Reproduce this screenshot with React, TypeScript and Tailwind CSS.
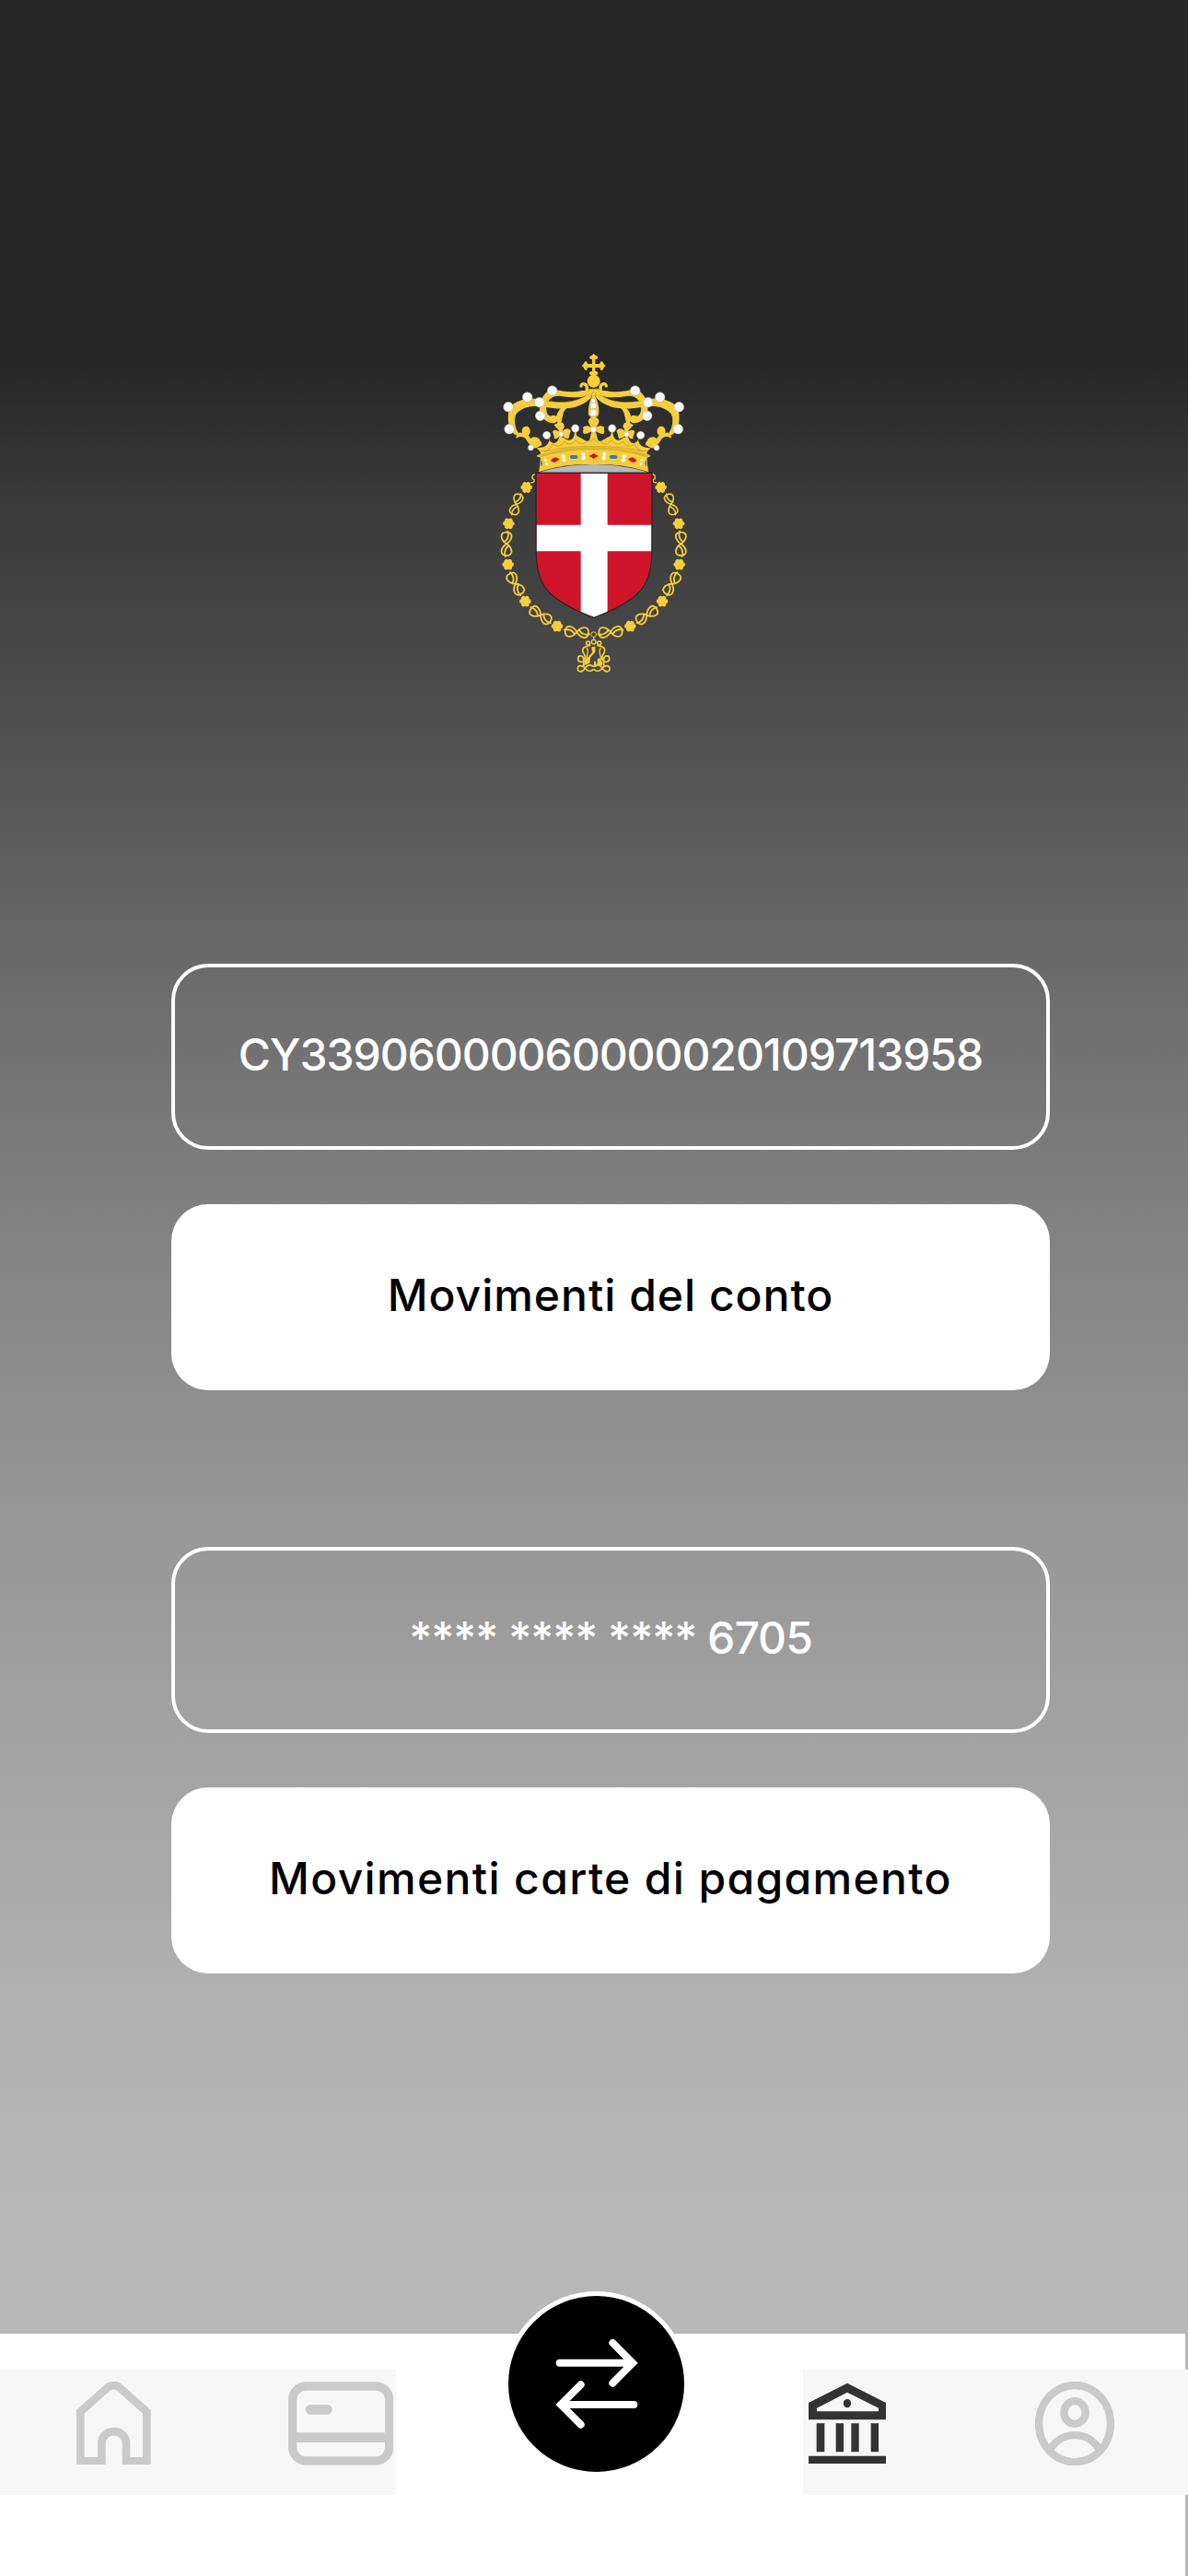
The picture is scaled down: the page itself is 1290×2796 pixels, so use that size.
const GOLD = '#f6ce3c'
const GOLD_SHADE = '#9c7d22'

const KNOTS = [
  { x: 123, y: 533, angle: -72, scale: 0.9 },
  { x: 91, y: 662, angle: 90, scale: 1 },
  { x: 120, y: 792, angle: 60, scale: 1 },
  { x: 202, y: 894, angle: 33, scale: 1 },
  { x: 320, y: 949, angle: 4, scale: 1 },
]

const ROSETTES = [
  { x: 156, y: 478 },
  { x: 98, y: 596 },
  { x: 96, y: 729 },
  { x: 152, y: 849 },
  { x: 256, y: 930 },
]

const PEARLS = [
  { x: 97, y: 216, r: 16 },
  { x: 100, y: 288, r: 16 },
  { x: 159, y: 184, r: 16 },
  { x: 240, y: 163, r: 16 },
  { x: 198, y: 201, r: 16 },
  { x: 201, y: 245, r: 16 },
  { x: 222, y: 308, r: 12.5 },
  { x: 315, y: 286, r: 12.5 },
  { x: 268, y: 305, r: 8 },
  { x: 170, y: 349, r: 9 },
]

interface PointProps {
  x: number
  y: number
}

interface KnotProps extends PointProps {
  angle: number
  scale: number
}

interface PearlProps extends PointProps {
  r: number
}

const Pearl = ({ x, y, r }: PearlProps) => (
  <circle cx={x} cy={y} r={r} fill="#fafafa" stroke="#a9a9a9" strokeWidth="1.5" />
)

const Knot = ({ x, y, angle, scale }: KnotProps) => (
  <g
    transform={`translate(${x} ${y}) rotate(${angle}) scale(${scale})`}
    fill="none"
    stroke={GOLD}
    strokeWidth="5.5"
    strokeLinecap="round"
  >
    <path d="M-38 0 C-38 -24 -14 -20 0 0 C14 20 38 24 38 0 C38 -24 14 -20 0 0 C-14 20 -38 24 -38 0Z" />
    <path d="M-41 -4 C-26 -10 -12 -2 -6 8 M41 4 C26 10 12 2 6 -8" />
  </g>
)

const Rosette = ({ x, y }: PointProps) => (
  <g transform={`translate(${x} ${y})`} fill={GOLD}>
    <circle r="15" />
    {[0, 60, 120, 180, 240, 300].map((angle) => (
      <circle key={angle} r="7" cy="-12" transform={`rotate(${angle + 30})`} />
    ))}
  </g>
)

const CrownHalf = () => (
  <g>
    {/* back and front arches */}
    <path
      d="M238 156 C262 164 296 169 318 166 C338 163 350 160 358 168 L362 178 C335 186 300 187 268 181 C242 178 226 190 221 214 C218 236 228 248 240 247 C252 240 258 252 254 262 C246 274 222 268 206 250 C192 222 196 180 238 156Z"
      fill={GOLD}
    />
    <path
      d="M364 172 C338 188 312 198 286 200 C256 202 222 198 196 190 C162 184 122 194 102 216 C94 238 94 268 104 292 C110 302 120 308 130 310 L132 304 C118 284 114 258 122 240 C134 222 162 212 198 213 C240 222 282 224 310 218 C338 210 356 198 368 184Z"
      fill={GOLD}
    />
    <path
      d="M364 172 C338 188 312 198 286 200 C262 201 240 200 222 196"
      fill="none"
      stroke={GOLD_SHADE}
      strokeWidth="1.5"
    />
    <path d="M292 216 C272 230 276 244 268 270 L258 268 C246 256 256 226 276 214Z" fill={GOLD} />
    <circle cx="244" cy="256" r="13" fill={GOLD} />
    {/* curl under the orb */}
    <path
      d="M372 170 C358 176 350 168 353 154 C353 138 334 138 334 148"
      fill="none"
      stroke={GOLD}
      strokeWidth="10"
      strokeLinecap="round"
    />
    {/* side leaf and scroll */}
    <path
      d="M122 318 C122 302 136 296 142 302 C138 284 150 276 160 280 C172 288 170 304 162 308 L170 320 C178 310 188 314 198 320 C200 330 208 330 206 340 C196 346 186 352 174 350 L152 318 C140 310 132 312 122 318Z"
      fill={GOLD}
    />
    {/* trefoil */}
    <path
      d="M258 268 C270 262 278 268 280 280 C276 286 274 290 274 295 C282 284 296 284 301 296 C294 304 298 312 292 320 C282 318 276 312 272 310 L276 334 L260 334 L264 310 C258 320 250 322 246 318 C248 308 240 304 242 294 C250 288 256 292 262 296 C262 288 250 284 246 274Z"
      fill={GOLD}
    />
    {/* coronet */}
    <path
      d="M375.500 312 L368 312 C364 326 352 332 342 322 L320 310 L315 288 L311 310 C304 328 290 328 278 316 L262 316 C258 334 244 340 232 326 L223 304 L230 326 C226 342 214 350 189 350 C196 358 204 362 202 368 L188 376 L202 382 C200 394 200 410 196 428 Q286 398 375.500 404Z"
      fill={GOLD}
    />
    <path
      d="M202 358 C226 366 238 346 242 336 C252 350 272 344 280 328 C290 342 308 338 316 324 C326 338 346 340 354 326"
      fill="none"
      stroke={GOLD_SHADE}
      strokeWidth="1.5"
    />
    <path
      d="M196 374 Q286 347 375 349 M200 378 Q286 352 375 354 M214 361 Q286 343 375 345"
      fill="none"
      stroke={GOLD_SHADE}
      strokeWidth="1.5"
    />
    {/* jewels */}
    <path d="M202 390 C210 394 210 404 203 411Z" fill="#3c7abf" />
    <path d="M234 390 Q244 382 248 380 Q256 382 264 386 Q256 394 248 397 Q240 396 234 390Z" fill="#ce142b" />
    <rect x="298" y="373" width="25" height="12" rx="5" fill="#3c7abf" />
    <g fill="#fff">
      <circle cx="218" cy="389" r="4" />
      <circle cx="222" cy="402" r="4" />
      <circle cx="276" cy="377" r="6.5" />
      <circle cx="278" cy="389" r="6.5" />
      <circle cx="341" cy="370" r="6" />
      <circle cx="342" cy="382" r="6.5" />
    </g>
    {PEARLS.map((pearl) => (
      <Pearl key={`${pearl.x}-${pearl.y}`} {...pearl} />
    ))}
  </g>
)

const CollarHalf = () => (
  <g>
    <path
      d="M183 434 C172 440 172 450 181 453 C184 460 176 464 170 462"
      fill="none"
      stroke={GOLD}
      strokeWidth="4"
    />
    {KNOTS.map((knot) => (
      <Knot key={knot.y} {...knot} />
    ))}
    {ROSETTES.map((rosette) => (
      <Rosette key={rosette.y} {...rosette} />
    ))}
    {/* pendant frame */}
    <g fill="none" stroke={GOLD} strokeWidth="5">
      <circle cx="357" cy="985" r="6" />
      <path d="M364 992 C344 996 336 1002 340 1014 C344 1024 352 1028 346 1040 C340 1050 324 1048 324 1036 C324 1024 338 1024 342 1034 L342 1060" />
      <path d="M352 1000 C362 1014 350 1024 352 1040" strokeWidth="4" />
      <path d="M375 1062 C362 1052 352 1058 346 1068 C338 1082 322 1080 323 1068 C324 1056 340 1056 348 1068 C356 1080 366 1078 375 1070" />
    </g>
  </g>
)

const Crest = () => (
  <svg viewBox="70 40 610 1045" className="h-[348.33px] w-[203.33px]">
    {[false, true].map((mirrored) => (
      <g key={String(mirrored)} transform={mirrored ? 'translate(750 0) scale(-1 1)' : undefined}>
        <CollarHalf />
        <CrownHalf />
      </g>
    ))}
    {/* cross and orb */}
    <g fill={GOLD}>
      <path d="M370 50 H380 V76 H404 V88 H380 V108 H370 V88 H346 V76 H370Z" />
      <path d="M375 42 L382 49 Q390 50 388 58 Q382 62 375 60 Q368 62 362 58 Q360 50 368 49Z" />
      <path d="M336 82 L343 75 Q344 67 352 68 Q357 75 355 82 Q357 89 352 97 Q344 97 343 89Z" />
      <path d="M414 82 L407 75 Q406 67 398 68 Q393 75 395 82 Q393 89 398 97 Q406 97 407 89Z" />
      <path d="M362 102 Q368 98 375 102 Q382 98 388 102 Q392 110 382 113 H368 Q358 110 362 102Z" />
      <circle cx="375" cy="132" r="21" />
      <path d="M357 158 H393 L385 180 H365Z" />
      <path d="M375 176 C360 190 356 228 358 240 Q362 250 375 250 Q388 250 391 240 C394 228 390 190 375 176Z" />
    </g>
    <path
      d="M360 156 Q367 150 375 158 Q383 150 390 156 M366 180 L372 168 L378 168 L384 180"
      fill="none"
      stroke={GOLD_SHADE}
      strokeWidth="1.5"
    />
    <Pearl x={374} y={196} r={7.5} />
    <Pearl x={374} y={212} r={10.5} />
    <Pearl x={374} y={235} r={11.5} />
    <path
      d="M375 244 C384 250 398 258 390 270 L384 282 C392 276 402 276 410 282 C406 290 414 298 406 304 C396 304 390 300 382 296 L388 322 L375 330 L362 322 L368 296 C360 300 354 304 344 304 C336 298 344 290 340 282 C348 276 358 276 366 282 L360 270 C352 258 366 250 375 244Z"
      fill={GOLD}
    />
    <path
      d="M354 326 Q366 334 375 318 Q384 334 396 326"
      fill="none"
      stroke={GOLD_SHADE}
      strokeWidth="1.5"
    />
    <Pearl x={374} y={290} r={9} />
    <path d="M359 376 Q370 371 375 367 Q381 371 391 376 Q381 381 375 385 Q370 381 359 376Z" fill="#ce142b" />
    <path d="M197 429 Q280 403 375 403 Q470 403 553 429Z" fill="#bab9b9" />
    {/* shield */}
    <clipPath id="shield">
      <path d="M188 432 H564 V676 C564 752 550 794 516 826 C480 858 430 882 376 902 C322 882 270 856 236 826 C202 794 188 752 188 676Z" />
    </clipPath>
    <g clipPath="url(#shield)">
      <rect x="180" y="430" width="390" height="480" fill="#ce142b" />
      <path d="M333 430 H420 V600 H570 V686 H420 V910 H333 V686 H180 V600 H333Z" fill="#fff" />
    </g>
    <path
      d="M187 431 H565 V676 C565 752 550 794 516 826 C480 858 430 882 376 902 C322 882 270 856 236 826 C202 794 187 752 187 676Z"
      fill="none"
      stroke="#272525"
      strokeWidth="3.5"
    />
    {/* pendant */}
    <g fill="none" stroke={GOLD} strokeWidth="4">
      <circle cx="375" cy="957" r="8.5" strokeWidth="3" />
      <path d="M375 966 V974" />
      <circle cx="375" cy="981" r="7" />
    </g>
    <path
      d="M368 998 L380 996 L380 1014 L364 1032 L362 1050 L344 1058 L344 1044 L354 1034 L370 1016Z M388 1036 L394 1034 L404 1048 L402 1058 L386 1056Z M377 1044 L382 1044 L384 1062 L374 1062Z"
      fill={GOLD}
    />
  </svg>
)

const HomeIcon = () => (
  <svg viewBox="248 373 243 272" className="h-[90.67px] w-[81px]" fill="none" stroke="#cacaca" strokeWidth="26">
    <path d="M261 632 V471 L350 392 Q369 378 388 392 L477 471 V632 H410 V575 C410 522 330 522 330 575 V632Z" />
  </svg>
)

const CardIcon = () => (
  <svg viewBox="938 373 343 273" className="h-[91px] w-[114.33px]" fill="none" stroke="#cacaca" strokeWidth="28">
    <rect x="952" y="388" width="315" height="243" rx="44" />
    <path d="M952 555 H1267" strokeWidth="32" />
    <path d="M1010 464 H1065" strokeWidth="32" strokeLinecap="round" />
  </svg>
)

const BankIcon = () => (
  <svg viewBox="114 373 252 268" className="h-[89.33px] w-[84px]" fill="#333">
    <path
      fillRule="evenodd"
      d="M240 378 L366 442 V497 H114 V442Z M240 408 L141 459 V470 H342 V459Z"
    />
    <ellipse cx="240" cy="444" rx="12.5" ry="14" />
    <path d="M140 509 H166 V602 H140Z M203 509 H228 V602 H203Z M253 509 H278 V602 H253Z M317 509 H342 V602 H317Z M114 615 H366 V641 H114Z" />
  </svg>
)

const ProfileIcon = () => (
  <svg viewBox="851 372 258 274" className="h-[91.33px] w-[86px]" fill="none" stroke="#cacaca" strokeWidth="25">
    <ellipse cx="980" cy="509" rx="117" ry="125" />
    <ellipse cx="980" cy="472.500" rx="35" ry="37" />
    <path d="M902 590 C938 532 1022 532 1058 590" />
  </svg>
)

const SwapIcon = () => (
  <svg viewBox="518 235 270 296" className="h-[98.67px] w-[90px]" fill="none" stroke="#fff" strokeWidth="24" strokeLinecap="round">
    <path d="M532 315.500 H762 M705 250 L770 315.500 L705 381 M774 451 H545 M601 386 L536 451 L601 516" />
    <path d="M762 299 L786 315.500 L762 332Z M544 434 L521 451 L544 468Z" fill="#fff" stroke="none" />
  </svg>
)

interface AccountGroupProps {
  number: string
  action: string
  numberClass: string
  actionClass: string
}

const AccountGroup = ({ number, action, numberClass, actionClass }: AccountGroupProps) => (
  <section className="flex flex-col gap-[59px]">
    <div className="flex h-[202px] items-center justify-center rounded-[40px] border-4 border-white pb-1 text-white">
      <span className={numberClass}>{number}</span>
    </div>
    <button className="flex h-[202px] items-center justify-center rounded-[40px] bg-white pb-1 text-black">
      <span className={actionClass}>{action}</span>
    </button>
  </section>
)

const App = () => {
  return (
    <div className="flex h-[2796px] w-[1290px] flex-col overflow-hidden bg-[linear-gradient(180deg,#262626_0px,#262626_390px,#3a3a3a_540px,#4b4b4b_740px,#696969_1030px,#7e7e7e_1280px,#8f8f8f_1530px,#979797_1660px,#b0b0b0_2160px,#b8b8b8_2420px)] font-['Inter',sans-serif] text-[48px] leading-none font-medium whitespace-nowrap">
      <header className="flex justify-center pt-[383.33px]">
        <Crest />
      </header>

      <main className="mt-[314.33px] ml-[186px] flex w-[954px] flex-col gap-[170px] [font-feature-settings:'cv11']">
        <AccountGroup
          number="CY33906000060000020109713958"
          action="Movimenti del conto"
          numberClass="tracking-[-1.05px]"
          actionClass="tracking-[1px]"
        />
        <AccountGroup
          number="**** **** **** 6705"
          action="Movimenti carte di pagamento"
          numberClass="tracking-[-0.95px]"
          actionClass="tracking-[1.35px]"
        />
      </main>

      <nav className="mt-auto flex h-[263px] w-[1287px] justify-between bg-white">
        <div className="mt-[39px] flex h-[136px] w-[430px] shrink-0 items-start justify-between bg-[#f7f7f7] pt-[12.5px] pr-[3px] pl-[82.67px]">
          <HomeIcon />
          <CardIcon />
        </div>
        <button className="-mt-[46px] mr-[7px] flex size-[201px] items-center justify-center rounded-full border-5 border-white bg-black">
          <SwapIcon />
        </button>
        <div className="mt-[39px] -mr-[3px] flex h-[136px] w-[418px] shrink-0 items-start justify-between bg-[#f7f7f7] pt-[12.5px] pr-[80.5px] pl-[6px]">
          <BankIcon />
          <ProfileIcon />
        </div>
      </nav>
    </div>
  )
}

export default App
